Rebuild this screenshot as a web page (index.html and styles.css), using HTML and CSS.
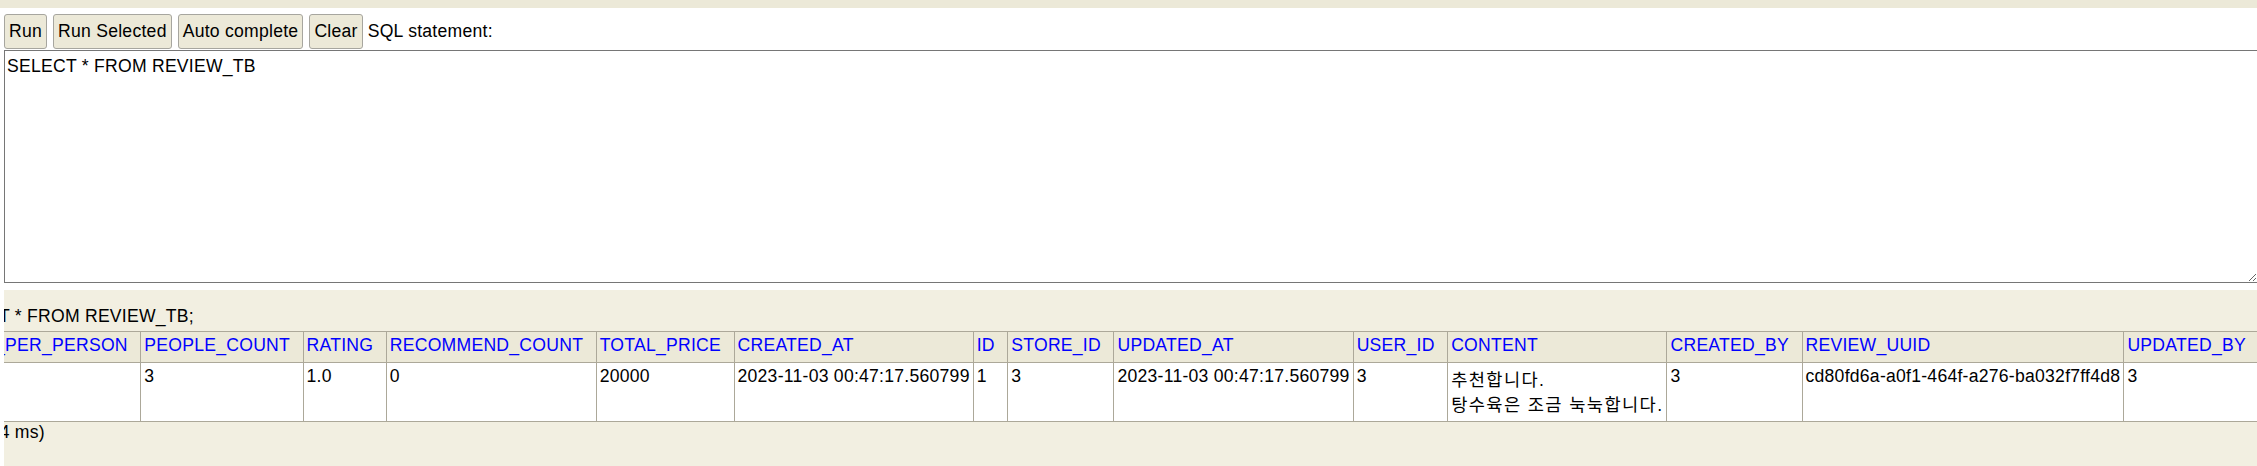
FILE: index.html
```html
<!DOCTYPE html>
<html lang="ko">
<head>
<meta charset="utf-8">
<title>H2 Console</title>
<link rel="stylesheet" href="styles.css">
</head>
<body>
<div class="topbar"></div>
<div class="query">
  <div class="toolbar">
    <button class="btn" type="button">Run</button>
    <button class="btn" type="button">Run Selected</button>
    <button class="btn" type="button">Auto complete</button>
    <button class="btn" type="button">Clear</button>
    <span class="label">SQL statement:</span>
  </div>
  <textarea class="sql" spellcheck="false">SELECT * FROM REVIEW_TB</textarea>
</div>
<div class="result">
  <div class="scroll">
    <div class="stmt"><span class="stmt-kw">SELECT</span> * FROM REVIEW_TB;</div>
    <table class="rs">
      <tr>
        <th>PRICE_PER_PERSON</th>
        <th>PEOPLE_COUNT</th>
        <th>RATING</th>
        <th>RECOMMEND_COUNT</th>
        <th>TOTAL_PRICE</th>
        <th>CREATED_AT</th>
        <th>ID</th>
        <th>STORE_ID</th>
        <th>UPDATED_AT</th>
        <th>USER_ID</th>
        <th>CONTENT</th>
        <th>CREATED_BY</th>
        <th>REVIEW_UUID</th>
        <th>UPDATED_BY</th>
      </tr>
      <tr>
        <td>6666</td>
        <td>3</td>
        <td>1.0</td>
        <td>0</td>
        <td>20000</td>
        <td>2023-11-03 00:47:17.560799</td>
        <td>1</td>
        <td>3</td>
        <td>2023-11-03 00:47:17.560799</td>
        <td>3</td>
        <td><span class="ko">추천합니다.<br>탕수육은 조금 눅눅합니다.</span></td>
        <td>3</td>
        <td>cd80fd6a-a0f1-464f-a276-ba032f7ff4d8</td>
        <td>3</td>
      </tr>
    </table>
    <div class="status">(1 row, 4 ms)</div>
  </div>
</div>
</body>
</html>
```

FILE: styles.css
```css
html, body {
  margin: 0;
  padding: 0;
  background: #ffffff;
  height: 100%;
  overflow: hidden;
}

body {
  font-family: "Liberation Sans", Arial, "Noto Sans CJK KR", sans-serif;
  font-size: 17.6px;
  letter-spacing: 0.25px;
  color: #000;
}

.topbar {
  height: 8px;
  background: #ece9d8;
}

.query {
  padding: 6px 0 7px 4px;
}

.toolbar {
  display: flex;
  align-items: center;
  gap: 6px;
  margin-bottom: 1px;
}

.btn {
  font-family: "Liberation Sans", Arial, sans-serif;
  font-size: 17.6px;
  letter-spacing: 0.25px;
  height: 35px;
  padding: 0 4px;
  margin: 0;
  background: #ece9d8;
  border: 1px solid #a7a69f;
  border-radius: 3px;
  color: #000;
}

.label {
  margin-left: -1px;
  white-space: nowrap;
}

.sql {
  display: block;
  box-sizing: border-box;
  width: calc(100% + 1px);
  height: 233px;
  margin: 0;
  padding: 5px 2px 2px;
  border: 1px solid #767676;
  font-family: "Liberation Sans", Arial, sans-serif;
  font-size: 17.6px;
  letter-spacing: 0.25px;
  line-height: normal;
  color: #000;
  resize: both;
  outline: none;
}

.result {
  margin-left: 4px;
  height: 176px;
  background: #f2efe1;
  overflow: hidden;
}

.scroll {
  width: max-content;
  margin-left: -68px;
  padding-top: 16px;
}

.stmt {
  white-space: nowrap;
  padding-left: 4px;
}

.rs {
  border-collapse: collapse;
  margin-top: 4px;
}

.rs th {
  background: #ece9d8;
  color: #0000ff;
  font-weight: normal;
  text-align: left;
  padding: 3px 12.5px 6px 3px;
  border: 1px solid #aca899;
  white-space: nowrap;
}

.rs td {
  background: #ffffff;
  text-align: left;
  vertical-align: top;
  padding: 3px 3px 5px;
  border: 1px solid #aca899;
  white-space: nowrap;
}

.ko {
  letter-spacing: 1.4px;
}

.status {
  white-space: nowrap;
  padding-left: 4px;
}
```
